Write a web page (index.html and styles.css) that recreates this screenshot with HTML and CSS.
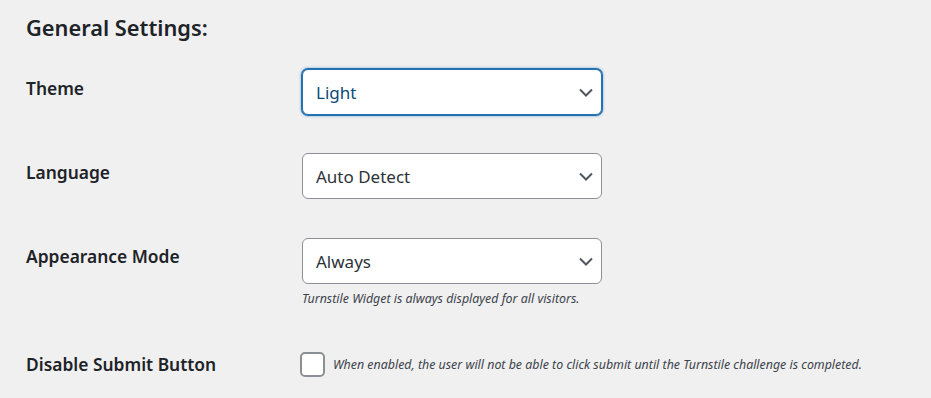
FILE: index.html
```html
<!DOCTYPE html>
<html lang="en">
<head>
<meta charset="utf-8">
<title>General Settings</title>
<link rel="stylesheet" href="styles.css">
</head>
<body>
<div class="wrap">
  <h2 class="title">General Settings:</h2>
  <div class="form">
    <div class="row row-theme">
      <div class="label">Theme</div>
      <div class="field">
        <div class="select-wrap">
          <select class="select focused"><option>Light</option></select>
          <svg class="chev" viewBox="0 0 14 9" width="14" height="9"><path d="M1 1.5l6 6 6-6" fill="none" stroke="#50575e" stroke-width="2"/></svg>
        </div>
      </div>
    </div>
    <div class="row row-lang">
      <div class="label">Language</div>
      <div class="field">
        <div class="select-wrap">
          <select class="select"><option>Auto Detect</option></select>
          <svg class="chev" viewBox="0 0 14 9" width="14" height="9"><path d="M1 1.5l6 6 6-6" fill="none" stroke="#50575e" stroke-width="2"/></svg>
        </div>
      </div>
    </div>
    <div class="row row-mode">
      <div class="label">Appearance Mode</div>
      <div class="field">
        <div class="select-wrap">
          <select class="select"><option>Always</option></select>
          <svg class="chev" viewBox="0 0 14 9" width="14" height="9"><path d="M1 1.5l6 6 6-6" fill="none" stroke="#50575e" stroke-width="2"/></svg>
        </div>
        <p class="desc">Turnstile Widget is always displayed for all visitors.</p>
      </div>
    </div>
    <div class="row row-check">
      <div class="label">Disable Submit Button</div>
      <div class="field check-field">
        <span class="checkbox"></span>
        <span class="desc inline">When enabled, the user will not be able to click submit until the Turnstile challenge is completed.</span>
      </div>
    </div>
  </div>
</div>
</body>
</html>
```

FILE: styles.css
```css
html, body {
  margin: 0;
  padding: 0;
  background: #f0f0f1;
}
body {
  font-family: "Noto Sans", "Open Sans", sans-serif;
  color: #1d2327;
}
.wrap {
  padding: 0 0 0 26px;
}
.title {
  margin: 0;
  padding-top: 14px;
  font-size: 21.8px;
  line-height: 28px;
  font-weight: 600;
  color: #1d2327;
}
.form {
  display: flex;
  flex-direction: column;
}
.row {
  display: flex;
  align-items: flex-start;
}
.label {
  width: 276px;
  flex: none;
  font-size: 17.4px;
  font-weight: 600;
  line-height: 24px;
  color: #1d2327;
}
.field {
  display: flex;
  flex-direction: column;
}
.row-theme { margin-top: 27px; }
.row-theme .label { padding-top: 7px; }
.row-lang { margin-top: 38px; }
.row-lang .label { padding-top: 7px; }
.row-mode { margin-top: 39px; }
.row-mode .label { padding-top: 6px; }
.row-check { margin-top: 45px; }
.row-check .label { padding-top: 0; }

.select-wrap {
  position: relative;
  width: 300px;
  height: 46px;
}
.select {
  -webkit-appearance: none;
  appearance: none;
  box-sizing: border-box;
  width: 300px;
  height: 46px;
  margin: 0;
  padding: 0 40px 0 13px;
  border: 1px solid #8c8f94;
  border-radius: 6px;
  background: #fff;
  font-family: "Noto Sans", "Open Sans", sans-serif;
  font-size: 17px;
  color: #2c3338;
  outline: none;
}
.select.focused {
  border-color: #2271b1;
  box-shadow: 0 0 0 1px #2271b1, 0 0 2px 2px rgba(34, 113, 177, 0.25);
  color: #0a4b78;
}
.chev {
  position: absolute;
  right: 9px;
  top: 19px;
  pointer-events: none;
}
.desc {
  margin: 6px 0 0;
  font-size: 12.4px;
  line-height: 17px;
  font-style: italic;
  color: #3c434a;
}
.check-field {
  flex-direction: row;
  align-items: center;
  margin-left: -2px;
}
.checkbox {
  box-sizing: border-box;
  width: 25px;
  height: 25px;
  border: 2px solid #8c8f94;
  border-radius: 5px;
  background: #fff;
  flex: none;
}
.desc.inline {
  margin: 0 0 0 8px;
}
```
